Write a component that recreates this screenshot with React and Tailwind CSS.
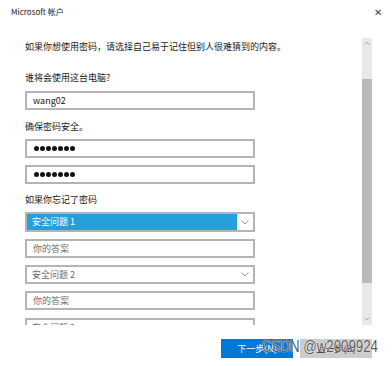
import React from "react";

const font = { fontFamily: '"Noto Sans CJK SC", "Noto Sans", "Liberation Sans", sans-serif' };

function Field({ children, className = "" }) {
  return (
    <div className={`w-[230px] h-[19px] border-2 border-[#b4b4b4] bg-white flex items-center pl-[6px] text-[9px] ${className}`}>
      {children}
    </div>
  );
}

function Dots() {
  return (
    <div className="flex gap-[1px] pl-[1px]">
      {[0, 1, 2, 3, 4, 5, 6].map((i) => (
        <span key={i} className="w-[5px] h-[5px] rounded-full bg-[#111]" />
      ))}
    </div>
  );
}

function Chevron({ color = "#8a8a8a" }) {
  return (
    <svg width="8" height="5" viewBox="0 0 8 5">
      <path d="M0.5 0.5 L4 4 L7.5 0.5" fill="none" stroke={color} strokeWidth="0.9" />
    </svg>
  );
}

function Select({ label, active }) {
  return (
    <div className={`w-[230px] ${active ? "h-[20px]" : "h-[19px]"} border-2 border-[#b4b4b4] flex items-stretch text-[9px]`}>
      <div className={`flex-1 flex items-center pl-[5px] ${active ? "bg-[#26a0da] text-white" : "bg-white text-[#6d6d6d]"}`}>{label}</div>
      <div className="w-[16px] bg-white flex items-center justify-center">
        <Chevron />
      </div>
    </div>
  );
}

export default function App() {
  return (
    <div className="relative w-[392px] h-[366px] bg-white overflow-hidden text-[#1a1a1a]" style={font}>
      <div className="flex items-center justify-between h-[24px] pl-[11px] pr-[10px]">
        <span className="text-[8px] leading-none">Microsoft 帐户</span>
        <span className="text-[10px] leading-none text-[#444]">✕</span>
      </div>
      <div className="mt-[14px] flex h-[287px]">
        <div className="w-[362px] overflow-hidden pl-[25px] pt-[3px] text-[9px] leading-[12px]">
          <div>如果你想使用密码，请选择自己易于记住但别人很难猜到的内容。</div>
          <div className="mt-[19px]">谁将会使用这台电脑?</div>
          <Field className="mt-[7px]">wang02</Field>
          <div className="mt-[11px]">确保密码安全。</div>
          <Field className="mt-[6px]"><Dots /></Field>
          <Field className="mt-[7px]"><Dots /></Field>
          <div className="mt-[10px]">如果你忘记了密码</div>
          <div className="mt-[6px]"><Select label="安全问题 1" active /></div>
          <Field className="mt-[7px] text-[#6d6d6d]">你的答案</Field>
          <div className="mt-[7px]"><Select label="安全问题 2" /></div>
          <Field className="mt-[7px] text-[#6d6d6d]">你的答案</Field>
          <div className="mt-[8px]"><Select label="安全问题 3" /></div>
        </div>
        <div className="w-[10px] bg-[#e8e8e8] flex flex-col">
          <div className="h-[41px] flex justify-center pt-[3px]">
            <svg width="6" height="4" viewBox="0 0 6 4"><path d="M0.5 3.5 L3 1 L5.5 3.5" fill="none" stroke="#9a9a9a" strokeWidth="0.8" /></svg>
          </div>
          <div className="h-[204px] bg-[#bababa]" />
          <div className="flex-1 flex justify-center items-end pb-[4px]">
            <svg width="6" height="4" viewBox="0 0 6 4"><path d="M0.5 0.5 L3 3 L5.5 0.5" fill="none" stroke="#9a9a9a" strokeWidth="0.8" /></svg>
          </div>
        </div>
      </div>
      <div className="flex justify-end gap-[7px] pr-[20px] mt-[14px]">
        <div className="w-[72px] h-[19px] bg-[#0078d7] text-white text-[9px] flex items-center justify-center">下一步(N)</div>
        <div className="w-[72px] h-[19px] bg-[#cccccc] text-[#222] text-[9px] flex items-center justify-center">上一步(B)</div>
      </div>
      <div className="absolute left-[262px] top-[338px] whitespace-nowrap text-[17px] leading-[18px] text-[#5a5a5a] scale-x-[0.78] origin-left" style={{ fontFamily: '"Liberation Sans", sans-serif', textShadow: "0 0 1px #fff, 0 0 1px #fff" }}>
        CSDN @w2009924
      </div>
    </div>
  );
}
